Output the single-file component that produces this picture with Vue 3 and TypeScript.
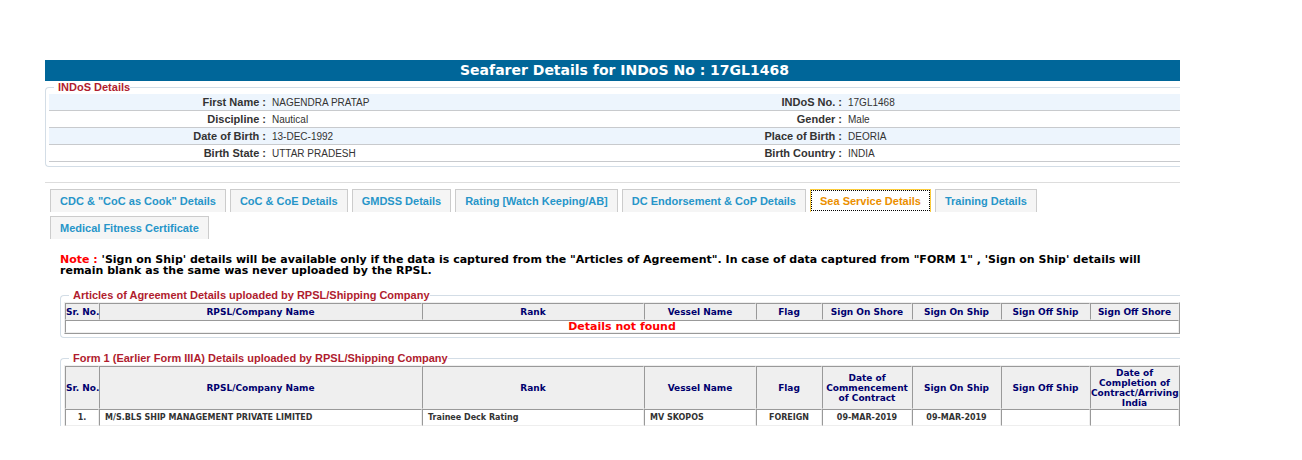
<script setup lang="ts">
import { ref } from 'vue'

interface Field {
  label: string
  value: string
}

const details: [Field, Field][] = [
  [{ label: 'First Name :', value: 'NAGENDRA PRATAP' }, { label: 'INDoS No. :', value: '17GL1468' }],
  [{ label: 'Discipline :', value: 'Nautical' }, { label: 'Gender :', value: 'Male' }],
  [{ label: 'Date of Birth :', value: '13-DEC-1992' }, { label: 'Place of Birth :', value: 'DEORIA' }],
  [{ label: 'Birth State :', value: 'UTTAR PRADESH' }, { label: 'Birth Country :', value: 'INDIA' }],
]

const tabs: string[] = [
  'CDC & "CoC as Cook" Details',
  'CoC & CoE Details',
  'GMDSS Details',
  'Rating [Watch Keeping/AB]',
  'DC Endorsement & CoP Details',
  'Sea Service Details',
  'Training Details',
  'Medical Fitness Certificate',
]
const active = ref('Sea Service Details')

const columns: string[] = ['no', 'company', 'rank', 'vessel', 'flag', 'start', 'date', 'date', 'date']
const articleHeads: string[] = [
  'Sr. No.', 'RPSL/Company Name', 'Rank', 'Vessel Name', 'Flag',
  'Sign On Shore', 'Sign On Ship', 'Sign Off Ship', 'Sign Off Shore',
]
const formHeads: string[] = [
  'Sr. No.', 'RPSL/Company Name', 'Rank', 'Vessel Name', 'Flag',
  'Date of Commencement of Contract', 'Sign On Ship', 'Sign Off Ship',
  'Date of Completion of Contract/Arriving India',
]
const formRows: string[][] = [
  ['1.', 'M/S.BLS SHIP MANAGEMENT PRIVATE LIMITED', 'Trainee Deck Rating', 'MV SKOPOS', 'FOREIGN', '09-MAR-2019', '09-MAR-2019', '', ''],
]
</script>

<template>
  <main class="page">
    <h1 class="title">Seafarer Details for INDoS No : 17GL1468</h1>

    <fieldset class="group">
      <legend>INDoS Details</legend>
      <table class="details">
        <colgroup>
          <col class="label-col"><col class="value-col"><col class="label-col"><col>
        </colgroup>
        <tbody>
          <tr v-for="(row, i) in details" :key="i">
            <template v-for="field in row" :key="field.label">
              <th scope="row">{{ field.label }}</th>
              <td>{{ field.value }}</td>
            </template>
          </tr>
        </tbody>
      </table>
    </fieldset>

    <nav class="tabs" role="tablist">
      <button
        v-for="tab in tabs"
        :key="tab"
        type="button"
        role="tab"
        class="tab"
        :class="{ active: tab === active }"
        :aria-selected="tab === active"
        @click="active = tab"
      >{{ tab }}</button>
    </nav>

    <section class="panel">
      <p class="note">
        <span class="mark">Note :</span> 'Sign on Ship' details will be available only if the data is captured from the "Articles of Agreement". In case of data captured from "FORM 1" , 'Sign on Ship' details will remain blank as the same was never uploaded by the RPSL.
      </p>

      <fieldset class="group">
        <legend>Articles of Agreement Details uploaded by RPSL/Shipping Company</legend>
        <table class="records">
          <colgroup><col v-for="(c, i) in columns" :key="i" :class="c"></colgroup>
          <thead>
            <tr><th v-for="h in articleHeads" :key="h" scope="col">{{ h }}</th></tr>
          </thead>
          <tbody>
            <tr><td class="empty" colspan="9">Details not found</td></tr>
          </tbody>
        </table>
      </fieldset>

      <fieldset class="group open">
        <legend>Form 1 (Earlier Form IIIA) Details uploaded by RPSL/Shipping Company</legend>
        <table class="records open">
          <colgroup><col v-for="(c, i) in columns" :key="i" :class="c"></colgroup>
          <thead>
            <tr><th v-for="h in formHeads" :key="h" scope="col">{{ h }}</th></tr>
          </thead>
          <tbody>
            <tr v-for="row in formRows" :key="row[0]">
              <td v-for="(cell, i) in row" :key="i" :class="{ text: i > 0 && i < 4 }">{{ cell }}</td>
            </tr>
          </tbody>
        </table>
      </fieldset>
    </section>
  </main>
</template>

<style>
body {
  background: #fff;
}
</style>

<style scoped>
.page {
  padding: 60px 122px 0 45px;
  font-family: "Liberation Sans", Arial, sans-serif;
  font-size: 11px;
  color: #333;
}
.title {
  margin: 0;
  padding-left: 24px;
  background: #069;
  color: #fff;
  text-align: center;
  font: bold 14px/21px "DejaVu Sans", Verdana, sans-serif;
}
.group {
  min-width: 0;
  margin: 0;
  padding: 0 0 4px 3px;
  border: 1px solid #d3dde6;
  border-right: 0;
  border-radius: 4px 0 0 4px;
}
.group legend {
  margin-left: 5px;
  padding: 0 0 0 4px;
  color: #b01c2e;
  font-weight: bold;
  line-height: 13px;
}
.details {
  width: 100%;
  table-layout: fixed;
  border-collapse: separate;
  border-spacing: 0;
}
.label-col {
  width: 220px;
}
.value-col {
  width: 356px;
}
.details th,
.details td {
  height: 16px;
  padding: 0 3px;
  border-bottom: 1px solid #c8cacd;
  line-height: 16px;
  text-align: left;
  vertical-align: baseline;
}
.details th {
  text-align: right;
}
.details td {
  font-size: 10px;
  line-height: 14px;
}
.details tr:nth-child(odd) {
  background: #edf5fd;
}
.tabs {
  display: flex;
  flex-wrap: wrap;
  gap: 4px;
  margin-top: 15px;
  padding: 6px 5px 0;
  border-top: 1px solid #ddd;
}
.tab {
  height: 23px;
  padding: 0 9px;
  border: 1px solid #ccc;
  border-bottom: 0;
  background: #f5f5f5;
  color: #2795c9;
  font: bold 11px/22px "Liberation Sans", Arial, sans-serif;
}
.tab.active {
  border-color: #fbcb3a;
  background: #fff;
  color: #eb8f00;
  outline: 1px dotted #000;
  outline-offset: -2px;
}
.panel {
  padding: 15px 0 0 15px;
}
.note {
  margin: 0 0 13px;
  padding-right: 28px;
  color: #000;
  font: bold 11px/11px "DejaVu Sans", Verdana, sans-serif;
}
.mark {
  color: #f00;
}
.panel .group {
  padding-bottom: 3px;
}
.panel .group.open {
  margin-top: 14px;
  padding-bottom: 0;
  border-bottom: 0;
  border-bottom-left-radius: 0;
}
.records {
  width: 100%;
  table-layout: fixed;
  border-collapse: separate;
  border-spacing: 0;
  border: 1px solid #999;
  border-top-color: #eee;
  border-left-color: #eee;
  font: bold 8px/10px "DejaVu Sans", Verdana, sans-serif;
  text-align: center;
}
.records.open {
  border-bottom: 0;
}
.no {
  width: 34px;
}
.rank {
  width: 222px;
}
.vessel {
  width: 112px;
}
.flag {
  width: 66px;
}
.start {
  width: 90px;
}
.date {
  width: 89px;
}
.records th,
.records td {
  padding: 0;
  border: 1px solid #999;
  border-right-color: #eee;
  border-bottom-color: #eee;
}
.records th {
  height: 15px;
  background: #efefef;
  color: #00006e;
  font-size: 9px;
}
.records.open th {
  padding-top: 1px;
}
.records th:first-child {
  white-space: nowrap;
}
.records td {
  height: 15px;
}
.records .text {
  padding-left: 5px;
  text-align: left;
}
.records .empty {
  height: 11px;
  color: #f00;
  font-size: 11px;
  line-height: 11px;
}
</style>
